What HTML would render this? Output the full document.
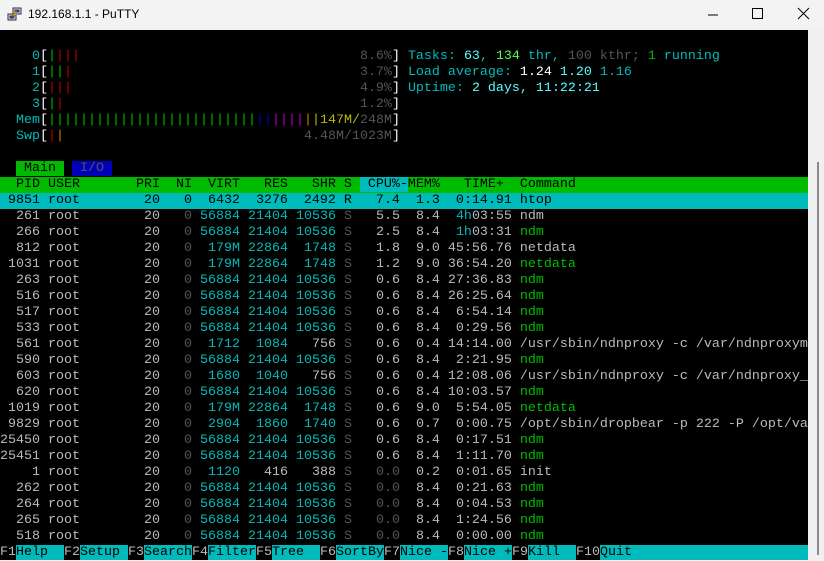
<!DOCTYPE html>
<html><head><meta charset="utf-8"><style>
*{margin:0;padding:0;box-sizing:border-box}
body{width:824px;height:560px;background:#f3f3f3;position:relative;overflow:hidden;font-family:"Liberation Sans",sans-serif}
#title{position:absolute;left:0;top:0;width:824px;height:30px;background:#f3f3f3}
#title .t{position:absolute;left:28px;top:7px;font-size:12px;color:#000}
#term{position:absolute;left:0;top:30px;width:808px;height:530px;background:#000}
#sb{position:absolute;left:808px;top:30px;width:16px;height:530px;background:#f0f0f0}
#thumb{position:absolute;left:817px;top:162px;width:2px;height:393px;background:#8a8a8a}
pre{position:absolute;left:0;top:33px;font-family:"Liberation Mono",monospace;font-size:13.333px;line-height:16px;color:#bbb;white-space:pre}
pre div{height:16px;width:808px}
.g{color:#bbb}.d{color:#555}.c{color:#00bbbb}.C{color:#55ffff}.gr{color:#00bb00}.G{color:#55ff55}
.r{color:#bb0000}.b{color:#0000bb}.m{color:#bb00bb}.y{color:#bbbb00}.o{color:#bb8800}.W{color:#fff}.k{color:#000}
.hdr{background:#00bb00;color:#000}
.sel{background:#00bbbb;color:#000}
.cb{background:#00bbbb;color:#000}
</style></head><body>
<div id="title">
<svg style="position:absolute;left:7px;top:6px" width="16" height="16" viewBox="0 0 16 16">
<rect x="1" y="8" width="8" height="6" fill="#ddd" stroke="#333" stroke-width="1"/>
<rect x="2.5" y="9.5" width="5" height="3" fill="#2a3b9c"/>
<rect x="6" y="2" width="8" height="6" fill="#ddd" stroke="#333" stroke-width="1"/>
<rect x="7.5" y="3.5" width="5" height="3" fill="#2a3b9c"/>
<path d="M9 5 L5 9 L8 9 L4 14 L10 8 L7 8 L10 5Z" fill="#f5d000" stroke="#806000" stroke-width="0.5"/>
</svg>
<span class="t">192.168.1.1 - PuTTY</span>
<svg style="position:absolute;left:706px;top:8px" width="14" height="14"><line x1="2" y1="7" x2="12" y2="7" stroke="#000" stroke-width="1"/></svg>
<svg style="position:absolute;left:751px;top:7px" width="14" height="14"><rect x="1.5" y="1.5" width="10" height="10" fill="none" stroke="#000" stroke-width="1"/></svg>
<svg style="position:absolute;left:797px;top:7px" width="14" height="14"><path d="M1 1L12 12M12 1L1 12" stroke="#000" stroke-width="1"/></svg>
</div>
<div id="term"></div>
<div id="sb"></div><div id="thumb"></div>
<pre><div> </div><div>    <span class="c">0</span><span class="W">[</span><span class="gr">|</span><span class="r">|||</span>                                   <span class="d">8.6%</span><span class="W">]</span> <span class="c">Tasks: </span><span class="C">63</span><span class="c">, </span><span class="G">134</span><span class="c"> thr, </span><span class="d">100 kthr; </span><span class="gr">1</span><span class="c"> running</span></div><div>    <span class="c">1</span><span class="W">[</span><span class="gr">||</span><span class="r">|</span>                                    <span class="d">3.7%</span><span class="W">]</span> <span class="c">Load average: </span><span class="W">1.24 </span><span class="C">1.20 </span><span class="c">1.16</span></div><div>    <span class="c">2</span><span class="W">[</span><span class="r">|||</span>                                    <span class="d">4.9%</span><span class="W">]</span> <span class="c">Uptime: </span><span class="C">2 days, 11:22:21</span></div><div>    <span class="c">3</span><span class="W">[</span><span class="gr">|</span><span class="r">|</span>                                     <span class="d">1.2%</span><span class="W">]</span></div><div>  <span class="c">Mem</span><span class="W">[</span><span class="gr">||||||||||||||||||||||||||</span><span class="b">||</span><span class="m">||||</span><span class="o">|</span><span class="y">|147M/</span><span class="d">248M</span><span class="W">]</span></div><div>  <span class="c">Swp</span><span class="W">[</span><span class="r">|</span><span class="o">|</span>                              <span class="d">4.48M/1023M</span><span class="W">]</span></div><div> </div><div>  <span style="background:#00bb00;color:#000"> Main </span> <span style="background:#0000bb;color:#555"> I/O </span></div><div class="hdr">  PID USER       PRI  NI  VIRT   RES   SHR S <span class="cb"> CPU%-</span>MEM%   TIME+  Command</div><div class="sel"> 9851 root        20   0  6432  3276  2492 R   7.4  1.3  0:14.91 htop</div><div>  261 root        20   <span class="d">0</span> <span class="c">56884 21404 10536</span> <span class="d">S</span>   5.5  8.4  <span class="c">4h</span>03:55 ndm</div><div>  266 root        20   <span class="d">0</span> <span class="c">56884 21404 10536</span> <span class="d">S</span>   2.5  8.4  <span class="c">1h</span>03:31 <span class="gr">ndm</span></div><div>  812 root        20   <span class="d">0</span>  <span class="c">179M 22864  1748</span> <span class="d">S</span>   1.8  9.0 45:56.76 netdata</div><div> 1031 root        20   <span class="d">0</span>  <span class="c">179M 22864  1748</span> <span class="d">S</span>   1.2  9.0 36:54.20 <span class="gr">netdata</span></div><div>  263 root        20   <span class="d">0</span> <span class="c">56884 21404 10536</span> <span class="d">S</span>   0.6  8.4 27:36.83 <span class="gr">ndm</span></div><div>  516 root        20   <span class="d">0</span> <span class="c">56884 21404 10536</span> <span class="d">S</span>   0.6  8.4 26:25.64 <span class="gr">ndm</span></div><div>  517 root        20   <span class="d">0</span> <span class="c">56884 21404 10536</span> <span class="d">S</span>   0.6  8.4  6:54.14 <span class="gr">ndm</span></div><div>  533 root        20   <span class="d">0</span> <span class="c">56884 21404 10536</span> <span class="d">S</span>   0.6  8.4  0:29.56 <span class="gr">ndm</span></div><div>  561 root        20   <span class="d">0</span>  <span class="c">1712  1084</span>   756 <span class="d">S</span>   0.6  0.4 14:14.00 /usr/sbin/ndnproxy -c /var/ndnproxym</div><div>  590 root        20   <span class="d">0</span> <span class="c">56884 21404 10536</span> <span class="d">S</span>   0.6  8.4  2:21.95 <span class="gr">ndm</span></div><div>  603 root        20   <span class="d">0</span>  <span class="c">1680  1040</span>   756 <span class="d">S</span>   0.6  0.4 12:08.06 /usr/sbin/ndnproxy -c /var/ndnproxy_</div><div>  620 root        20   <span class="d">0</span> <span class="c">56884 21404 10536</span> <span class="d">S</span>   0.6  8.4 10:03.57 <span class="gr">ndm</span></div><div> 1019 root        20   <span class="d">0</span>  <span class="c">179M 22864  1748</span> <span class="d">S</span>   0.6  9.0  5:54.05 <span class="gr">netdata</span></div><div> 9829 root        20   <span class="d">0</span>  <span class="c">2904  1860  1740</span> <span class="d">S</span>   0.6  0.7  0:00.75 /opt/sbin/dropbear -p 222 -P /opt/va</div><div>25450 root        20   <span class="d">0</span> <span class="c">56884 21404 10536</span> <span class="d">S</span>   0.6  8.4  0:17.51 <span class="gr">ndm</span></div><div>25451 root        20   <span class="d">0</span> <span class="c">56884 21404 10536</span> <span class="d">S</span>   0.6  8.4  1:11.70 <span class="gr">ndm</span></div><div>    1 root        20   <span class="d">0</span>  <span class="c">1120</span>   416   388 <span class="d">S</span>   <span class="d">0.0</span>  0.2  0:01.65 init</div><div>  262 root        20   <span class="d">0</span> <span class="c">56884 21404 10536</span> <span class="d">S</span>   <span class="d">0.0</span>  8.4  0:21.63 <span class="gr">ndm</span></div><div>  264 root        20   <span class="d">0</span> <span class="c">56884 21404 10536</span> <span class="d">S</span>   <span class="d">0.0</span>  8.4  0:04.53 <span class="gr">ndm</span></div><div>  265 root        20   <span class="d">0</span> <span class="c">56884 21404 10536</span> <span class="d">S</span>   <span class="d">0.0</span>  8.4  1:24.56 <span class="gr">ndm</span></div><div>  518 root        20   <span class="d">0</span> <span class="c">56884 21404 10536</span> <span class="d">S</span>   <span class="d">0.0</span>  8.4  0:00.00 <span class="gr">ndm</span></div><div>F1<span class="cb">Help  </span>F2<span class="cb">Setup </span>F3<span class="cb">Search</span>F4<span class="cb">Filter</span>F5<span class="cb">Tree  </span>F6<span class="cb">SortBy</span>F7<span class="cb">Nice -</span>F8<span class="cb">Nice +</span>F9<span class="cb">Kill  </span>F10<span class="cb">Quit                      </span></div></pre>
</body></html>
